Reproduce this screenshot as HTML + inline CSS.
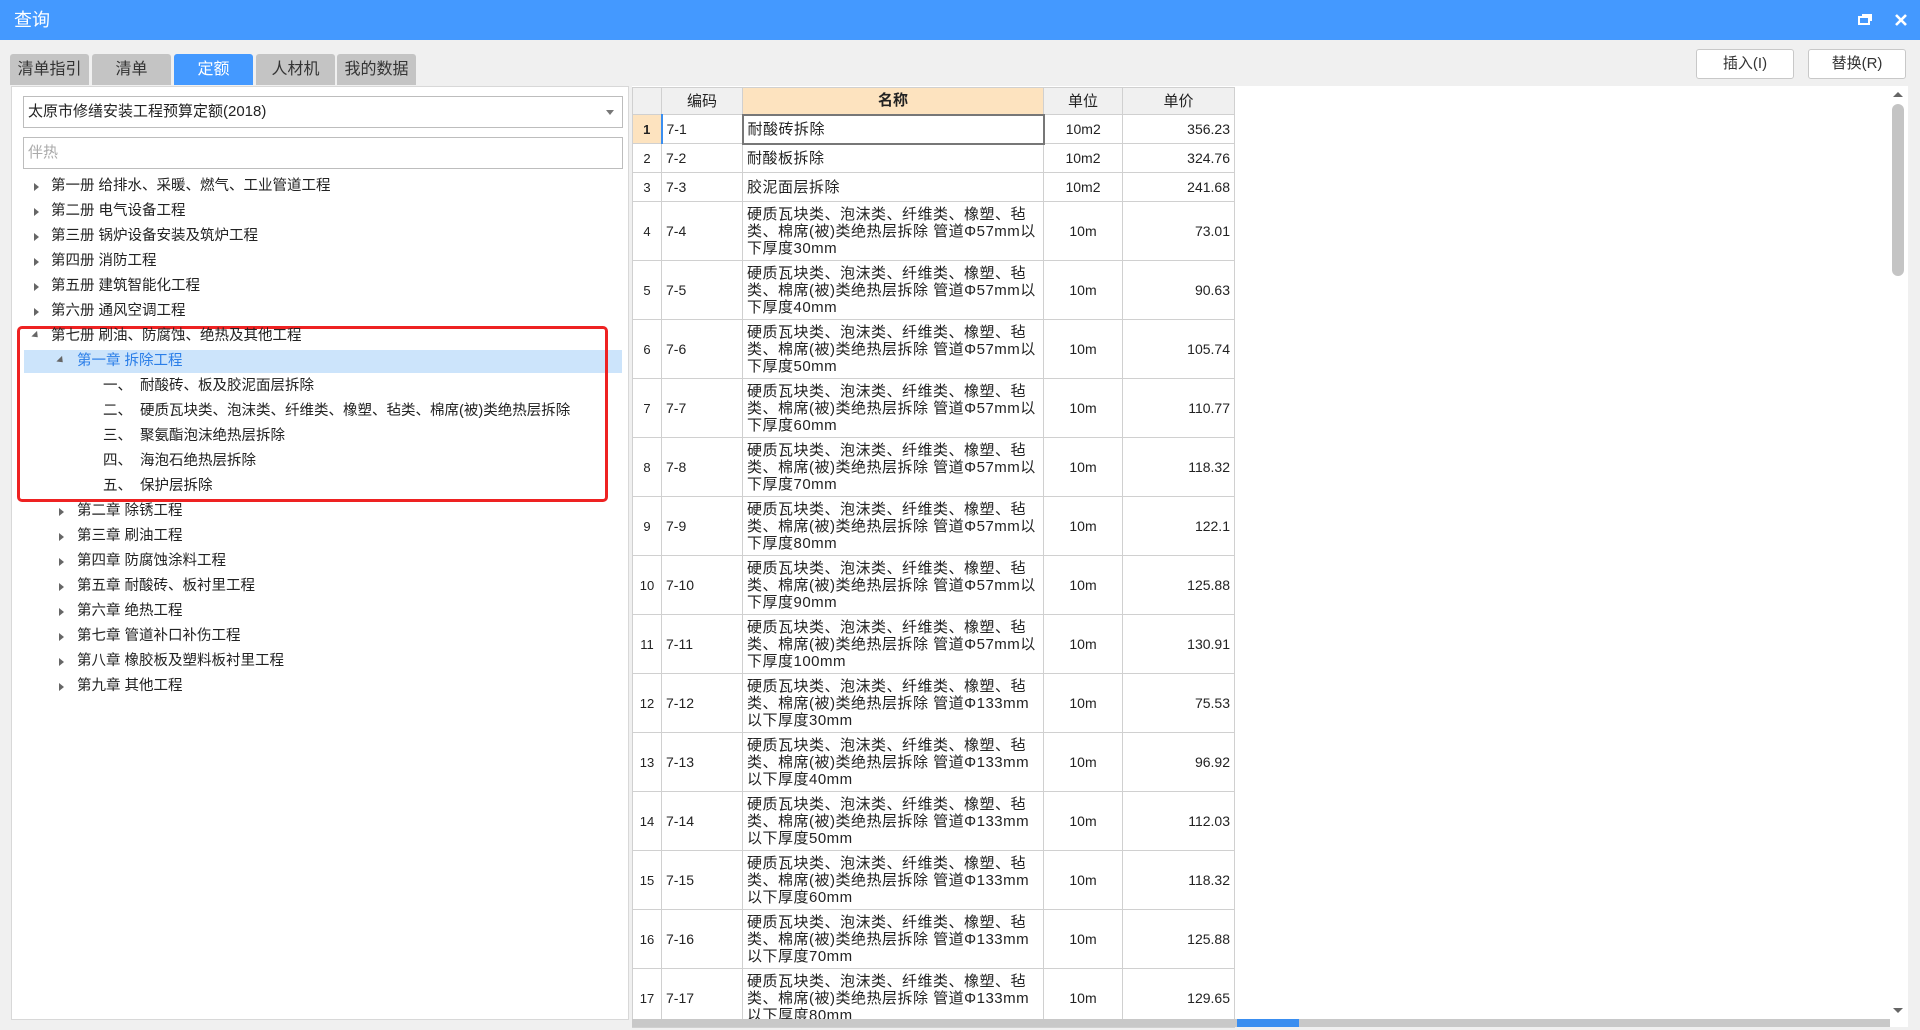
<!DOCTYPE html>
<html><head><meta charset="utf-8"><style>
*{margin:0;padding:0;box-sizing:border-box}
body{width:1920px;height:1030px;background:#f0f0f0;font-family:"Liberation Sans","Noto Sans CJK SC",sans-serif;position:relative;overflow:hidden;color:#222}
.abs{position:absolute}
.title{left:0;top:0;width:1920px;height:40px;background:#4499ff;color:#fff;font-size:18px;line-height:40px;padding-left:14px}
.tab{top:54px;height:31px;width:79px;background:#c4c4c4;border-radius:3px 3px 0 0;font-size:16px;line-height:31px;text-align:center;color:#333}
.tab.on{background:#4499ff;color:#fff}
.btn{top:49px;height:30px;width:98px;background:#fff;border:1px solid #c8c8c8;border-radius:3px;font-size:15px;line-height:28px;text-align:center;color:#333}
.left{left:11px;top:86px;width:618px;height:934px;background:#fff;border:1px solid #d8d8d8}
.inp{left:23px;width:600px;height:32px;border:1px solid #bdbdbd;background:#fff;font-size:15px;line-height:30px;padding-left:4px}
.tr{height:25px;line-height:25px;font-size:14.5px;color:#222;white-space:nowrap}
.ar{width:0;height:0;border-top:4px solid transparent;border-bottom:4px solid transparent;border-left:5px solid #666}
.ad{width:0;height:0;border-left:4px solid transparent;border-right:4px solid transparent;border-top:5px solid #666;transform:rotate(-45deg)}
.right{left:632px;top:86px;width:1276px;height:941px;background:#fff}
table{border-collapse:collapse;position:absolute;left:632px;top:87px;font-family:"Liberation Sans","Noto Sans CJK SC",sans-serif;font-size:14px;color:#222;table-layout:fixed}
td,th{border:1px solid #d0d0d0;padding:0 4px;line-height:17px;overflow:hidden}
th{background:#f0f0f0;font-weight:normal;height:27px;font-size:15px}
td.n{text-align:center;width:29px;font-size:13px;padding:0}
td.c{width:81px}
td.m{width:301px;line-height:17px;font-size:15px;letter-spacing:0.5px}
td.u{text-align:center;width:79px}
td.p{text-align:right;width:112px}
</style></head><body>
<div class="abs title">查询</div>
<svg class="abs" style="left:1858px;top:13px" width="16" height="14"><rect x="1" y="4" width="10" height="7" fill="none" stroke="#fff" stroke-width="2"/><path d="M4 2h9v6" fill="none" stroke="#fff" stroke-width="2"/></svg>
<svg class="abs" style="left:1894px;top:13px" width="14" height="14"><path d="M2 2L12 12M12 2L2 12" stroke="#fff" stroke-width="2.6"/></svg>
<div class="abs tab" style="left:10px">清单指引</div>
<div class="abs tab" style="left:92px">清单</div>
<div class="abs tab on" style="left:174px">定额</div>
<div class="abs tab" style="left:256px">人材机</div>
<div class="abs tab" style="left:337px">我的数据</div>
<div class="abs btn" style="left:1696px">插入(I)</div>
<div class="abs btn" style="left:1808px">替换(R)</div>

<div class="abs left"></div>
<div class="abs inp" style="top:96px">太原市修缮安装工程预算定额(2018)<span class="abs" style="right:8px;top:13px;border-left:4px solid transparent;border-right:4px solid transparent;border-top:5px solid #777;width:0;height:0"></span></div>
<div class="abs inp" style="top:137px;color:#aaa">伴热</div>

<div class="abs" style="left:24px;top:350px;width:598px;height:23px;background:#cce4fb"></div>
<div class="abs" style="left:17px;top:326px;width:591px;height:176px;border:3px solid #ee2222;border-radius:5px"></div>

<div class="abs" style="left:0;top:174px;width:630px">
<div class="tr" style="position:relative;padding-left:51px"><span class="abs ar" style="left:34px;top:9px"></span>第一册 给排水、采暖、燃气、工业管道工程</div>
<div class="tr" style="position:relative;padding-left:51px"><span class="abs ar" style="left:34px;top:9px"></span>第二册 电气设备工程</div>
<div class="tr" style="position:relative;padding-left:51px"><span class="abs ar" style="left:34px;top:9px"></span>第三册 锅炉设备安装及筑炉工程</div>
<div class="tr" style="position:relative;padding-left:51px"><span class="abs ar" style="left:34px;top:9px"></span>第四册 消防工程</div>
<div class="tr" style="position:relative;padding-left:51px"><span class="abs ar" style="left:34px;top:9px"></span>第五册 建筑智能化工程</div>
<div class="tr" style="position:relative;padding-left:51px"><span class="abs ar" style="left:34px;top:9px"></span>第六册 通风空调工程</div>
<div class="tr" style="position:relative;padding-left:51px"><span class="abs ad" style="left:32px;top:9px"></span>第七册 刷油、防腐蚀、绝热及其他工程</div>
<div class="tr" style="position:relative;padding-left:77px;color:#2a7ee8"><span class="abs ad" style="left:57px;top:9px"></span>第一章 拆除工程</div>
<div class="tr" style="padding-left:103px">一、 &nbsp;耐酸砖、板及胶泥面层拆除</div>
<div class="tr" style="padding-left:103px">二、 &nbsp;硬质瓦块类、泡沫类、纤维类、橡塑、毡类、棉席(被)类绝热层拆除</div>
<div class="tr" style="padding-left:103px">三、 &nbsp;聚氨酯泡沫绝热层拆除</div>
<div class="tr" style="padding-left:103px">四、 &nbsp;海泡石绝热层拆除</div>
<div class="tr" style="padding-left:103px">五、 &nbsp;保护层拆除</div>
<div class="tr" style="position:relative;padding-left:77px"><span class="abs ar" style="left:59px;top:9px"></span>第二章 除锈工程</div>
<div class="tr" style="position:relative;padding-left:77px"><span class="abs ar" style="left:59px;top:9px"></span>第三章 刷油工程</div>
<div class="tr" style="position:relative;padding-left:77px"><span class="abs ar" style="left:59px;top:9px"></span>第四章 防腐蚀涂料工程</div>
<div class="tr" style="position:relative;padding-left:77px"><span class="abs ar" style="left:59px;top:9px"></span>第五章 耐酸砖、板衬里工程</div>
<div class="tr" style="position:relative;padding-left:77px"><span class="abs ar" style="left:59px;top:9px"></span>第六章 绝热工程</div>
<div class="tr" style="position:relative;padding-left:77px"><span class="abs ar" style="left:59px;top:9px"></span>第七章 管道补口补伤工程</div>
<div class="tr" style="position:relative;padding-left:77px"><span class="abs ar" style="left:59px;top:9px"></span>第八章 橡胶板及塑料板衬里工程</div>
<div class="tr" style="position:relative;padding-left:77px"><span class="abs ar" style="left:59px;top:9px"></span>第九章 其他工程</div>
</div>

<div class="abs right"></div>
<table>
<colgroup><col style="width:29px"><col style="width:81px"><col style="width:301px"><col style="width:79px"><col style="width:112px"></colgroup>
<tr><th></th><th>编码</th><th style="background:#fde3bf;font-weight:bold">名称</th><th>单位</th><th>单价</th></tr>
<tr style="height:29px"><td class="n" style="background:#fde3bf;font-weight:bold">1</td><td class="c" style="border-left:2px solid #3a8ef0">7-1</td><td class="m" style="border:2px solid #777">耐酸砖拆除</td><td class="u">10m2</td><td class="p">356.23</td></tr>
<tr style="height:29px"><td class="n">2</td><td class="c">7-2</td><td class="m">耐酸板拆除</td><td class="u">10m2</td><td class="p">324.76</td></tr>
<tr style="height:29px"><td class="n">3</td><td class="c">7-3</td><td class="m">胶泥面层拆除</td><td class="u">10m2</td><td class="p">241.68</td></tr>
<tr style="height:59px"><td class="n">4</td><td class="c">7-4</td><td class="m">硬质瓦块类、泡沫类、纤维类、橡塑、毡类、棉席(被)类绝热层拆除 管道Φ57mm以下厚度30mm</td><td class="u">10m</td><td class="p">73.01</td></tr>
<tr style="height:59px"><td class="n">5</td><td class="c">7-5</td><td class="m">硬质瓦块类、泡沫类、纤维类、橡塑、毡类、棉席(被)类绝热层拆除 管道Φ57mm以下厚度40mm</td><td class="u">10m</td><td class="p">90.63</td></tr>
<tr style="height:59px"><td class="n">6</td><td class="c">7-6</td><td class="m">硬质瓦块类、泡沫类、纤维类、橡塑、毡类、棉席(被)类绝热层拆除 管道Φ57mm以下厚度50mm</td><td class="u">10m</td><td class="p">105.74</td></tr>
<tr style="height:59px"><td class="n">7</td><td class="c">7-7</td><td class="m">硬质瓦块类、泡沫类、纤维类、橡塑、毡类、棉席(被)类绝热层拆除 管道Φ57mm以下厚度60mm</td><td class="u">10m</td><td class="p">110.77</td></tr>
<tr style="height:59px"><td class="n">8</td><td class="c">7-8</td><td class="m">硬质瓦块类、泡沫类、纤维类、橡塑、毡类、棉席(被)类绝热层拆除 管道Φ57mm以下厚度70mm</td><td class="u">10m</td><td class="p">118.32</td></tr>
<tr style="height:59px"><td class="n">9</td><td class="c">7-9</td><td class="m">硬质瓦块类、泡沫类、纤维类、橡塑、毡类、棉席(被)类绝热层拆除 管道Φ57mm以下厚度80mm</td><td class="u">10m</td><td class="p">122.1</td></tr>
<tr style="height:59px"><td class="n">10</td><td class="c">7-10</td><td class="m">硬质瓦块类、泡沫类、纤维类、橡塑、毡类、棉席(被)类绝热层拆除 管道Φ57mm以下厚度90mm</td><td class="u">10m</td><td class="p">125.88</td></tr>
<tr style="height:59px"><td class="n">11</td><td class="c">7-11</td><td class="m">硬质瓦块类、泡沫类、纤维类、橡塑、毡类、棉席(被)类绝热层拆除 管道Φ57mm以下厚度100mm</td><td class="u">10m</td><td class="p">130.91</td></tr>
<tr style="height:59px"><td class="n">12</td><td class="c">7-12</td><td class="m">硬质瓦块类、泡沫类、纤维类、橡塑、毡类、棉席(被)类绝热层拆除 管道Φ133mm以下厚度30mm</td><td class="u">10m</td><td class="p">75.53</td></tr>
<tr style="height:59px"><td class="n">13</td><td class="c">7-13</td><td class="m">硬质瓦块类、泡沫类、纤维类、橡塑、毡类、棉席(被)类绝热层拆除 管道Φ133mm以下厚度40mm</td><td class="u">10m</td><td class="p">96.92</td></tr>
<tr style="height:59px"><td class="n">14</td><td class="c">7-14</td><td class="m">硬质瓦块类、泡沫类、纤维类、橡塑、毡类、棉席(被)类绝热层拆除 管道Φ133mm以下厚度50mm</td><td class="u">10m</td><td class="p">112.03</td></tr>
<tr style="height:59px"><td class="n">15</td><td class="c">7-15</td><td class="m">硬质瓦块类、泡沫类、纤维类、橡塑、毡类、棉席(被)类绝热层拆除 管道Φ133mm以下厚度60mm</td><td class="u">10m</td><td class="p">118.32</td></tr>
<tr style="height:59px"><td class="n">16</td><td class="c">7-16</td><td class="m">硬质瓦块类、泡沫类、纤维类、橡塑、毡类、棉席(被)类绝热层拆除 管道Φ133mm以下厚度70mm</td><td class="u">10m</td><td class="p">125.88</td></tr>
<tr style="height:59px"><td class="n">17</td><td class="c">7-17</td><td class="m">硬质瓦块类、泡沫类、纤维类、橡塑、毡类、棉席(被)类绝热层拆除 管道Φ133mm以下厚度80mm</td><td class="u">10m</td><td class="p">129.65</td></tr>
</table>
<div class="abs" style="left:632px;top:1019px;width:1258px;height:8px;background:#c8c8c8"></div>
<div class="abs" style="left:1237px;top:1019px;width:62px;height:8px;background:#3a8ef0"></div>
<div class="abs" style="left:1890px;top:87px;width:16px;height:936px;background:#fff"></div>
<div class="abs" style="left:1893px;top:92px;width:0;height:0;border-left:5px solid transparent;border-right:5px solid transparent;border-bottom:5px solid #666"></div>
<div class="abs" style="left:1892px;top:104px;width:12px;height:172px;background:#c4c4c4;border-radius:6px"></div>
<div class="abs" style="left:1893px;top:1008px;width:0;height:0;border-left:5px solid transparent;border-right:5px solid transparent;border-top:5px solid #666"></div>
</body></html>
